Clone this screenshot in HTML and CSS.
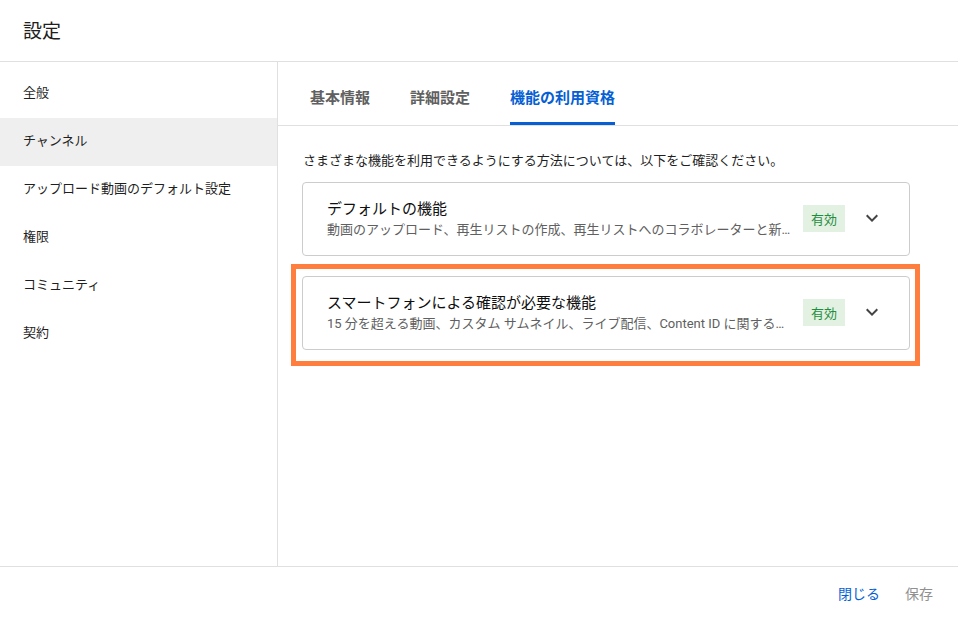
FILE: index.html
```html
<!DOCTYPE html>
<html lang="ja">
<head>
    <meta charset="UTF-8">
    <meta name="viewport" content="width=device-width, initial-scale=1.0">
    <title>設定</title>
    <link rel="stylesheet" href="styles.css">
</head>
<body>
    <div class="dialog">
        <div class="dialog-header">
            <h1>設定</h1>
        </div>
        <div class="dialog-body">
            <ul class="sidebar">
                <li>全般</li>
                <li class="active">チャンネル</li>
                <li>アップロード動画のデフォルト設定</li>
                <li>権限</li>
                <li>コミュニティ</li>
                <li>契約</li>
            </ul>
            <div class="main">
                <div class="tabs">
                    <div class="tab">基本情報</div>
                    <div class="tab">詳細設定</div>
                    <div class="tab selected">機能の利用資格</div>
                </div>
                <div class="content">
                    <p class="intro">さまざまな機能を利用できるようにする方法については、以下をご確認ください。</p>
                    <div class="feature-card">
                        <div class="feature-text">
                            <div class="feature-title">デフォルトの機能</div>
                            <div class="feature-desc">動画のアップロード、再生リストの作成、再生リストへのコラボレーターと新しい動画の追加</div>
                        </div>
                        <span class="badge">有効</span>
                        <svg class="chevron" width="24" height="24" viewBox="0 0 24 24"><path d="M7.4 8.6 12 13.2l4.6-4.6L18 10l-6 6-6-6z" fill="#444"/></svg>
                    </div>
                    <div class="feature-card highlighted">
                        <div class="feature-text">
                            <div class="feature-title">スマートフォンによる確認が必要な機能</div>
                            <div class="feature-desc">15 分を超える動画、カスタム サムネイル、ライブ配信、Content ID に関する再審査請求</div>
                        </div>
                        <span class="badge">有効</span>
                        <svg class="chevron" width="24" height="24" viewBox="0 0 24 24"><path d="M7.4 8.6 12 13.2l4.6-4.6L18 10l-6 6-6-6z" fill="#444"/></svg>
                    </div>
                </div>
            </div>
        </div>
        <div class="dialog-footer">
            <button class="btn-close">閉じる</button>
            <button class="btn-save" disabled>保存</button>
        </div>
    </div>
</body>
</html>
```

FILE: styles.css
```css
body {
    margin: 0;
    font-family: Roboto, "Noto Sans CJK JP", sans-serif;
    color: #0f0f0f;
    background: #fff;
}
.dialog {
    width: 958px;
    height: 618px;
    display: flex;
    flex-direction: column;
    overflow: hidden;
}
.dialog-header {
    height: 62px;
    border-bottom: 1px solid #e0e0e0;
    display: flex;
    align-items: center;
    padding: 0 0 2px 23px;
    box-sizing: border-box;
    flex-shrink: 0;
}
.dialog-header h1 {
    margin: 0;
    font-size: 19px;
    font-weight: 400;
    color: #202020;
}
.dialog-body {
    flex: 1;
    display: flex;
    min-height: 0;
}
.sidebar {
    list-style: none;
    margin: 0;
    padding: 8px 0 0;
    width: 277px;
    border-right: 1px solid #e0e0e0;
    flex-shrink: 0;
}
.sidebar li {
    height: 48px;
    display: flex;
    align-items: center;
    padding: 0 0 5px 23px;
    box-sizing: border-box;
    font-size: 13px;
    color: #1f1f1f;
}
.sidebar li.active {
    background-color: #efefef;
}
.main {
    flex: 1;
    min-width: 0;
    display: flex;
    flex-direction: column;
}
.tabs {
    height: 63px;
    border-bottom: 1px solid #e0e0e0;
    display: flex;
    gap: 40px;
    padding-left: 32px;
}
.tab {
    display: flex;
    align-items: center;
    padding-top: 9px;
    font-size: 15px;
    font-weight: 700;
    color: #606060;
    border-bottom: 3px solid transparent;
}
.tab.selected {
    color: #065fd4;
    border-bottom-color: #065fd4;
}
.content {
    padding: 26px 48px 0 24px;
}
.intro {
    margin: 0 0 12px 1px;
    font-size: 13px;
    line-height: 18px;
    color: #1f1f1f;
}
.feature-card {
    position: relative;
    height: 74px;
    box-sizing: border-box;
    border: 1px solid #cccccc;
    border-radius: 4px;
    display: flex;
    align-items: center;
    padding: 0 25px 0 24px;
    margin-bottom: 20px;
}
.feature-card.highlighted::after {
    content: "";
    position: absolute;
    top: -13px;
    left: -12px;
    right: -11px;
    bottom: -17px;
    border: 5px solid #ff7e3e;
    pointer-events: none;
}
.feature-text {
    flex: 1;
    min-width: 0;
    margin-right: 8px;
    padding-bottom: 2px;
}
.feature-title {
    font-size: 15px;
    line-height: 22px;
    color: #0f0f0f;
}
.feature-desc {
    font-size: 13px;
    line-height: 19px;
    color: #606060;
    white-space: nowrap;
    overflow: hidden;
    text-overflow: ellipsis;
}
.badge {
    background-color: #e3f1e3;
    color: #1e8e3e;
    font-size: 13px;
    height: 27px;
    width: 42px;
    flex-shrink: 0;
    display: flex;
    align-items: center;
    justify-content: center;
    margin-top: -2px;
    margin-right: 15px;
}
.chevron {
    flex-shrink: 0;
    margin-top: -3px;
}
.dialog-footer {
    height: 51px;
    border-top: 1px solid #e0e0e0;
    display: flex;
    align-items: center;
    justify-content: flex-end;
    gap: 25px;
    padding-right: 25px;
    flex-shrink: 0;
}
.dialog-footer button {
    background: none;
    border: none;
    padding: 0;
    font-family: inherit;
    font-size: 14px;
    cursor: pointer;
}
.btn-close {
    color: #065fd4;
}
.btn-save {
    color: #909090;
}
```
